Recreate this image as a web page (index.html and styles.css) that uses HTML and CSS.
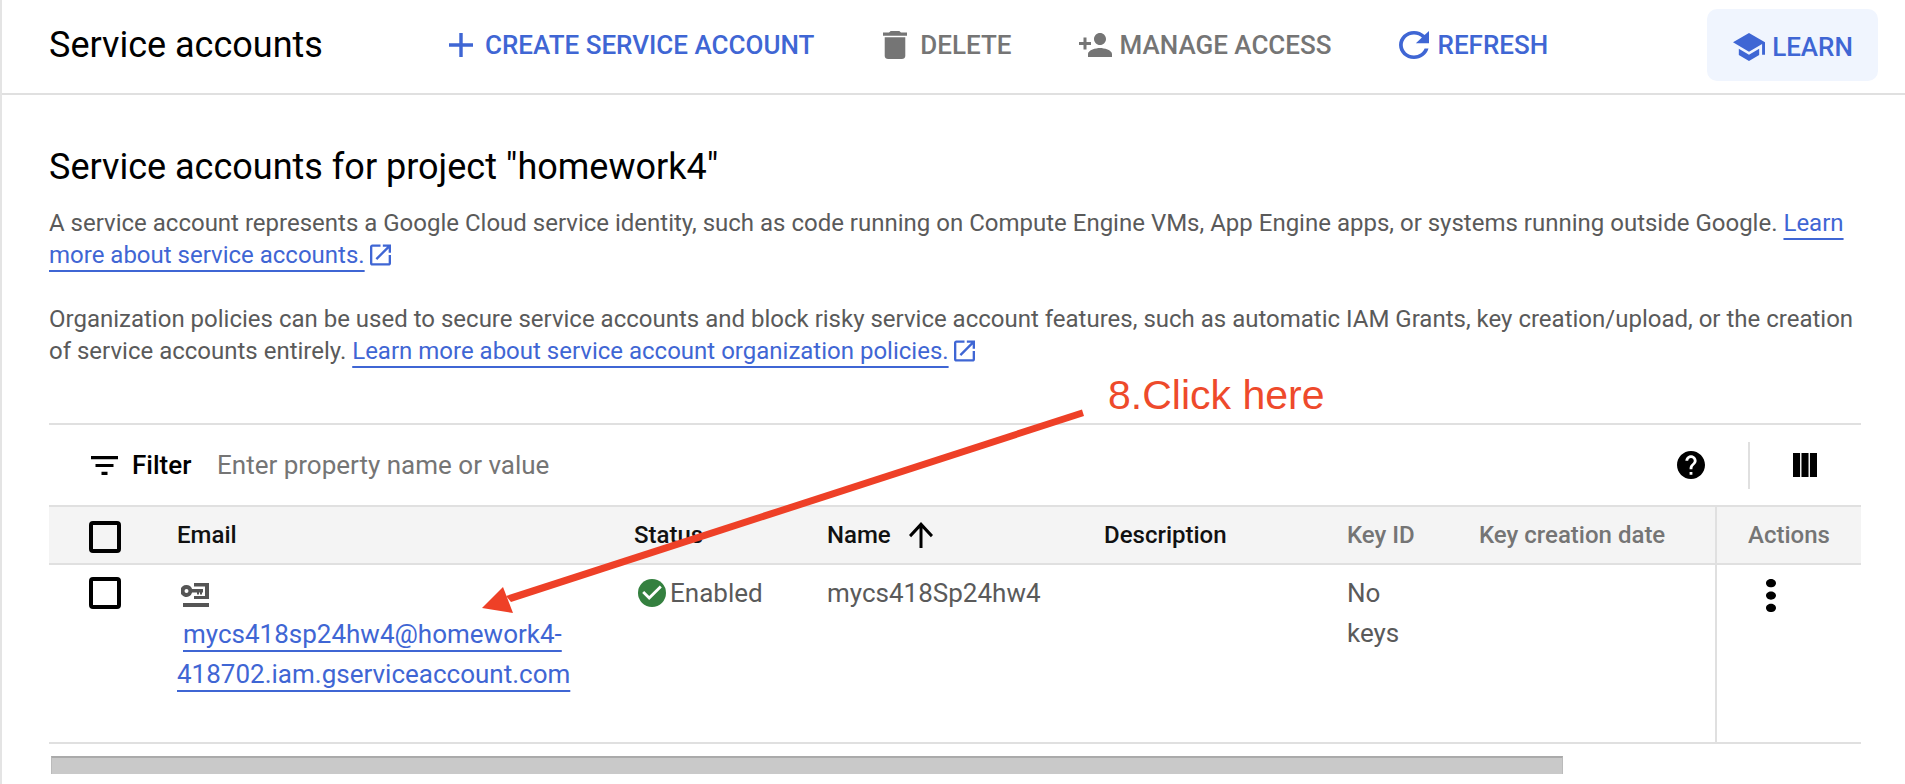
FILE: index.html
```html
<!DOCTYPE html>
<html lang="en">
<head>
<meta charset="utf-8">
<title>Service accounts</title>
<link rel="stylesheet" href="styles.css">
</head>
<body>
<div class="page">
  <header class="topbar">
    <h1 class="topbar-title">Service accounts</h1>
    <button class="action blue a-create"><svg class="ic-create" viewBox="5 5 14 14"><path d="M19 13h-6v6h-2v-6H5v-2h6V5h2v6h6v2z"/></svg>CREATE SERVICE ACCOUNT</button>
    <button class="action grey a-delete"><svg class="ic-delete" viewBox="5 3 14 18" preserveAspectRatio="none"><path d="M6 19c0 1.1.9 2 2 2h8c1.1 0 2-.9 2-2V7H6v12zM19 4h-3.5l-1-1h-5l-1 1H5v2h14V4z"/></svg>DELETE</button>
    <button class="action grey a-manage"><svg class="ic-manage" viewBox="1 4 22 16" preserveAspectRatio="none"><path d="M15 12c2.21 0 4-1.79 4-4s-1.79-4-4-4-4 1.79-4 4 1.79 4 4 4zm-9-2V7H4v3H1v2h3v3h2v-3h3v-2H6zm9 4c-2.67 0-8 1.34-8 4v2h16v-2c0-2.66-5.33-4-8-4z"/></svg>MANAGE ACCESS</button>
    <button class="action blue a-refresh"><svg class="ic-refresh" viewBox="4 4 16 16" preserveAspectRatio="none"><path d="M17.65 6.35C16.2 4.9 14.21 4 12 4c-4.42 0-7.99 3.58-7.99 8s3.57 8 7.99 8c3.73 0 6.84-2.55 7.73-6h-2.08c-.82 2.33-3.04 4-5.65 4-3.31 0-6-2.69-6-6s2.69-6 6-6c1.66 0 3.14.69 4.22 1.78L13 11h7V4l-2.35 2.35z"/></svg>REFRESH</button>
    <button class="action blue learn"><svg class="ic-learn" viewBox="1 3 22 18" preserveAspectRatio="none"><path d="M5 13.18v4L12 21l7-3.82v-4L12 17l-7-3.82zM12 3L1 9l11 6 9-4.91V17h2V9L12 3z"/></svg>LEARN</button>
  </header>

  <main class="content">
    <h2 class="heading">Service accounts for project "homework4"</h2>
    <p class="para">A service account represents a Google Cloud service identity, such as code running on Compute Engine VMs, App Engine apps, or systems running outside Google. <a class="link" href="#">Learn more about service accounts.</a><svg class="ext" viewBox="3 3 18 18"><path d="M19 19H5V5h7V3H5c-1.11 0-2 .9-2 2v14c0 1.1.89 2 2 2h14c1.1 0 2-.9 2-2v-7h-2v7zM14 3v2h3.59l-9.83 9.83 1.41 1.41L19 6.41V10h2V3h-7z"/></svg></p>
    <p class="para para-2">Organization policies can be used to secure service accounts and block risky service account features, such as automatic IAM Grants, key creation/upload, or the creation of service accounts entirely. <a class="link" href="#">Learn more about service account organization policies.</a><svg class="ext" viewBox="3 3 18 18"><path d="M19 19H5V5h7V3H5c-1.11 0-2 .9-2 2v14c0 1.1.89 2 2 2h14c1.1 0 2-.9 2-2v-7h-2v7zM14 3v2h3.59l-9.83 9.83 1.41 1.41L19 6.41V10h2V3h-7z"/></svg></p>

    <section class="table">
      <div class="filterbar">
        <svg class="ic-filter" viewBox="3 6 18 12" preserveAspectRatio="none"><path d="M10 18h4v-2h-4v2zM3 6v2h18V6H3zm3 7h12v-2H6v2z"/></svg>
        <span class="filter-label">Filter</span>
        <span class="filter-input">Enter property name or value</span>
        <svg class="ic-help" viewBox="2 2 20 20"><path d="M12 2C6.48 2 2 6.48 2 12s4.48 10 10 10 10-4.48 10-10S17.52 2 12 2zm1 17h-2v-2h2v2zm2.07-7.75l-.9.92C13.45 12.9 13 13.5 13 15h-2v-.5c0-1.1.45-2.1 1.17-2.83l1.24-1.26c.37-.36.59-.86.59-1.41 0-1.1-.9-2-2-2s-2 .9-2 2H8c0-2.21 1.79-4 4-4s4 1.79 4 4c0 .88-.36 1.68-.93 2.25z"/></svg>
        <span class="vr"></span>
        <svg class="ic-cols" viewBox="4 5 17 13" preserveAspectRatio="none"><path d="M10 18h5V5h-5v13zm-6 0h5V5H4v13zM16 5v13h5V5h-5z"/></svg>
      </div>

      <div class="row head">
        <div class="cell cb-cell"><span class="checkbox"></span></div>
        <div class="cell strong">Email</div>
        <div class="cell strong">Status</div>
        <div class="cell strong">Name<svg class="ic-sort" viewBox="4 4 16 16" preserveAspectRatio="none"><path d="M4 12l1.41 1.41L11 7.83V20h2V7.83l5.58 5.59L20 12l-8-8-8 8z"/></svg></div>
        <div class="cell strong">Description</div>
        <div class="cell">Key ID</div>
        <div class="cell">Key creation date</div>
        <div class="cell actions">Actions</div>
      </div>

      <div class="row body">
        <div class="cell cb-cell"><span class="checkbox"></span></div>
        <div class="cell email">
          <svg class="ic-key" viewBox="0 0 28 25"><path fill-rule="evenodd" d="M5.500 3a6 6 0 0 1 5.600 4H22v3.500h-1v2h-2v-2h-1v2h-2v-2h-4.900A6 6 0 1 1 5.500 3zm0 4a2 2 0 1 0 0 4a2 2 0 0 0 0-4z"/><path d="M13 1h15v16H13v-3h11V4.500H13zM2 21h26v4H2z"/></svg>
          <p class="email-text"><a class="link" href="#">mycs418sp24hw4@homework4-418702.iam.gserviceaccount.com</a></p>
        </div>
        <div class="cell status"><svg class="ic-ok" viewBox="2 2 20 20"><circle cx="12" cy="12" r="10" fill="#34803f"/><path fill="#fff" d="M10 17l-5-5 1.410-1.410L10 14.170l7.590-7.590L19 8z"/></svg>Enabled</div>
        <div class="cell">mycs418Sp24hw4</div>
        <div class="cell"></div>
        <div class="cell keyid">No keys</div>
        <div class="cell"></div>
        <div class="cell actions"><svg class="ic-more" viewBox="10 4 4 16" preserveAspectRatio="none"><path d="M12 8c1.100 0 2-.9 2-2s-.9-2-2-2-2 .9-2 2 .9 2 2 2zm0 2c-1.100 0-2 .9-2 2s.9 2 2 2 2-.9 2-2-.9-2-2-2zm0 6c-1.100 0-2 .9-2 2s.9 2 2 2 2-.9 2-2-.9-2-2-2z"/></svg></div>
      </div>
      <div class="scrollbar"></div>
    </section>
  </main>

  <div class="note">8.Click here</div>
  <svg class="note-arrow" viewBox="0 0 1905 784"><polygon points="1082,409.500 1084,416 511,602 506,596"/><polygon points="482,608 503,587 513,613"/></svg>
</div>
</body>
</html>
```

FILE: styles.css
```css
* { box-sizing: border-box; }
html, body { margin: 0; padding: 0; background: #fff; }
body { font-family: Roboto, "Liberation Sans", sans-serif; color: #555; overflow: hidden; }
.page { position: relative; width: 1905px; height: 784px; border-left: 2px solid #e4e4e4; overflow: hidden; }

/* top bar */
.topbar { display: flex; align-items: center; height: 95px; border-bottom: 2px solid #e0e0e0; padding-left: 47px; }
.topbar-title { margin: 0 0 3px; width: 400px; font-size: 36px; font-weight: 400; color: #000; white-space: nowrap; }
.action { display: flex; align-items: center; padding: 0; border: 0; background: none; font: 500 26px Roboto, sans-serif; white-space: nowrap; margin-bottom: 3px; }
.action svg { display: block; fill: currentColor; }
.blue { color: #3f66d4; }
.grey { color: #757575; }
.ic-create { width: 24px; height: 24px; margin-right: 12px; }
.a-delete { margin-left: 69px; }
.ic-delete { width: 24px; height: 28px; margin-right: 13px; }
.a-manage { margin-left: 67px; }
.ic-manage { width: 33px; height: 24px; margin-right: 8px; }
.a-refresh { margin-left: 67px; }
.ic-refresh { width: 30px; height: 28px; margin-right: 9px; }
.learn { margin: 0 0 3px 159px; width: 171px; height: 72px; padding: 4px 0 0 26px; border-radius: 10px; background: #f0f5fe; }
.ic-learn { width: 32px; height: 28px; margin-right: 7px; }

/* intro */
.content { padding: 50px 0 0 47px; }
.heading { margin: 0 0 18px; font-size: 36px; line-height: 44px; font-weight: 400; color: #000; }
.para { margin: 0; width: 1813px; font-size: 24px; line-height: 32px; color: #5a5a5a; }
.para-2 { margin-top: 32px; }
.link { color: #3f66d4; text-decoration: underline; text-decoration-thickness: 2px; text-underline-offset: 7px; }
.ext { width: 21px; height: 22px; margin-left: 5px; vertical-align: -3px; fill: #3f66d4; }

/* table */
.table { margin-top: 56px; width: 1812px; border-top: 2px solid #e0e0e0; }
.filterbar { display: flex; align-items: center; height: 80px; padding-left: 42px; }
.ic-filter { width: 27px; height: 19px; margin-right: 14px; fill: #000; }
.filter-label { width: 85px; font-size: 26px; font-weight: 500; color: #000; }
.filter-input { flex: 1; font-size: 26px; color: #757575; }
.ic-help { width: 28px; height: 28px; fill: #000; }
.vr { width: 2px; height: 47px; margin: 0 43px; background: #e0e0e0; }
.ic-cols { width: 24px; height: 24px; margin-right: 44px; fill: #000; }

.row { display: grid; grid-template-columns: 128px 457px 193px 277px 243px 132px 236px 146px; }
.head { height: 60px; background: #f4f4f4; border-top: 2px solid #e0e0e0; border-bottom: 2px solid #e0e0e0; font-size: 24px; font-weight: 500; color: #757575; }
.head .cell { display: flex; align-items: center; white-space: nowrap; }
.strong { color: #111; }
.body { height: 179px; border-bottom: 2px solid #e0e0e0; font-size: 26px; line-height: 40px; color: #5a5a5a; }
.body .cell { padding-top: 8px; }
.head .cb-cell { padding: 14px 0 0 40px; align-items: flex-start; }
.body .cb-cell { padding: 12px 0 0 40px; }
.checkbox { display: block; width: 32px; height: 32px; border: 4px solid #000; border-radius: 4px; }
.actions { border-left: 2px solid #e0e0e0; padding-left: 31px; }
.head .actions { color: #757575; }
.ic-sort { width: 24px; height: 26px; margin-left: 18px; fill: #000; }
.ic-key { display: block; width: 28px; height: 25px; margin: 9px 0 7px 4px; fill: #555; }
.email-text { margin: 0; width: 410px; text-indent: 6px; }
.status { display: flex; align-items: flex-start; margin-left: 4px; }
.ic-ok { width: 28px; height: 28px; margin: 6px 4px 0 0; flex: none; }
.keyid { width: 70px; }
.body .actions { padding: 14px 0 0 49px; }
.ic-more { display: block; width: 10px; height: 33px; fill: #000; }
.scrollbar { margin: 12px 0 0 2px; width: 1512px; height: 18px; background: #c9c9c9; border-top: 2px solid #aaa; border-left: 1px solid #bbb; border-right: 1px solid #bbb; }

/* annotation */
.note { position: absolute; left: 1106px; top: 372px; font: 41px "Liberation Sans", sans-serif; color: #ee4a2b; white-space: nowrap; }
.note-arrow { position: absolute; left: -2px; top: 0; width: 1905px; height: 784px; fill: #ee4027; pointer-events: none; }
```
